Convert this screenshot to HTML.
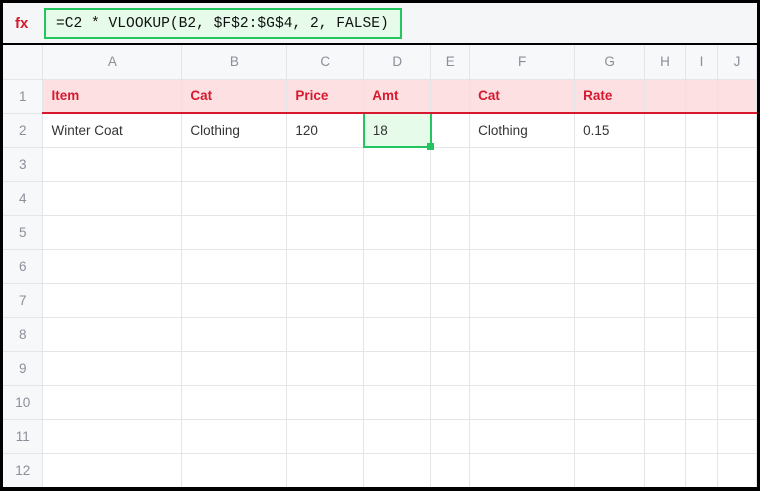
<!DOCTYPE html>
<html><head><style>
*{margin:0;padding:0;box-sizing:border-box}
body{width:760px;height:491px;background:#000;font-family:"Liberation Sans",sans-serif;overflow:hidden;position:relative}
.fb{position:absolute;left:3px;top:3px;width:754px;height:40px;background:#f5f6f7}
.fx{position:absolute;left:12px;top:12px;color:#d6192e;font-weight:bold;font-size:15px}
.fbox{position:absolute;left:41px;top:5px;width:358px;height:31px;border:2px solid #22c55e;background:#e6fbe9;font-family:"Liberation Mono",monospace;font-size:14.6px;color:#111;padding:6px 0 0 10px}
.grid{position:absolute;left:3px;top:45px;width:754px;height:442px;background:#fff;overflow:hidden}
table{border-collapse:collapse;table-layout:fixed;font-size:13.5px}
td{height:34px;border-right:1px solid #e3e5e8;border-bottom:1px solid #e3e5e8;padding:0 0 0 8px;color:#333;white-space:nowrap;overflow:hidden}
tr.h td{background:#f7f8fa;color:#8a8f98;text-align:center;padding:0}
td.r{background:#f7f8fa;color:#8a8f98;text-align:center;padding:0}
tr.one td{background:#fde1e2;color:#d6192e;font-weight:bold;border-bottom:2px solid #d6192e}
tr.one td.r{background:#f7f8fa;color:#8a8f98;font-weight:normal;border-bottom:1px solid #e3e5e8}
td.sel{background:#e6fbe9;border:2px solid #22c55e;position:relative;overflow:visible}
.hdl{position:absolute;right:-4px;bottom:-4px;width:7px;height:7px;background:#22c55e}
</style></head><body>
<div class="fb"><div class="fx">fx</div><div class="fbox">=C2 * VLOOKUP(B2, $F$2:$G$4, 2, FALSE)</div></div>
<div class="grid"><table>
<colgroup><col style="width:40px"><col style="width:139px"><col style="width:105px"><col style="width:77px"><col style="width:67px"><col style="width:39px"><col style="width:105px"><col style="width:70px"><col style="width:41px"><col style="width:32px"><col style="width:39px"></colgroup>
<tr class="h"><td></td><td>A</td><td>B</td><td>C</td><td>D</td><td>E</td><td>F</td><td>G</td><td>H</td><td>I</td><td>J</td></tr>
<tr class="one"><td class="r">1</td><td>Item</td><td>Cat</td><td>Price</td><td>Amt</td><td></td><td>Cat</td><td>Rate</td><td></td><td></td><td></td></tr>
<tr><td class="r">2</td><td>Winter Coat</td><td>Clothing</td><td>120</td><td class="sel">18<div class="hdl"></div></td><td></td><td>Clothing</td><td>0.15</td><td></td><td></td><td></td></tr>
<tr><td class="r">3</td><td></td><td></td><td></td><td></td><td></td><td></td><td></td><td></td><td></td><td></td></tr>
<tr><td class="r">4</td><td></td><td></td><td></td><td></td><td></td><td></td><td></td><td></td><td></td><td></td></tr>
<tr><td class="r">5</td><td></td><td></td><td></td><td></td><td></td><td></td><td></td><td></td><td></td><td></td></tr>
<tr><td class="r">6</td><td></td><td></td><td></td><td></td><td></td><td></td><td></td><td></td><td></td><td></td></tr>
<tr><td class="r">7</td><td></td><td></td><td></td><td></td><td></td><td></td><td></td><td></td><td></td><td></td></tr>
<tr><td class="r">8</td><td></td><td></td><td></td><td></td><td></td><td></td><td></td><td></td><td></td><td></td></tr>
<tr><td class="r">9</td><td></td><td></td><td></td><td></td><td></td><td></td><td></td><td></td><td></td><td></td></tr>
<tr><td class="r">10</td><td></td><td></td><td></td><td></td><td></td><td></td><td></td><td></td><td></td><td></td></tr>
<tr><td class="r">11</td><td></td><td></td><td></td><td></td><td></td><td></td><td></td><td></td><td></td><td></td></tr>
<tr><td class="r">12</td><td></td><td></td><td></td><td></td><td></td><td></td><td></td><td></td><td></td><td></td></tr>
</table></div>
</body></html>
